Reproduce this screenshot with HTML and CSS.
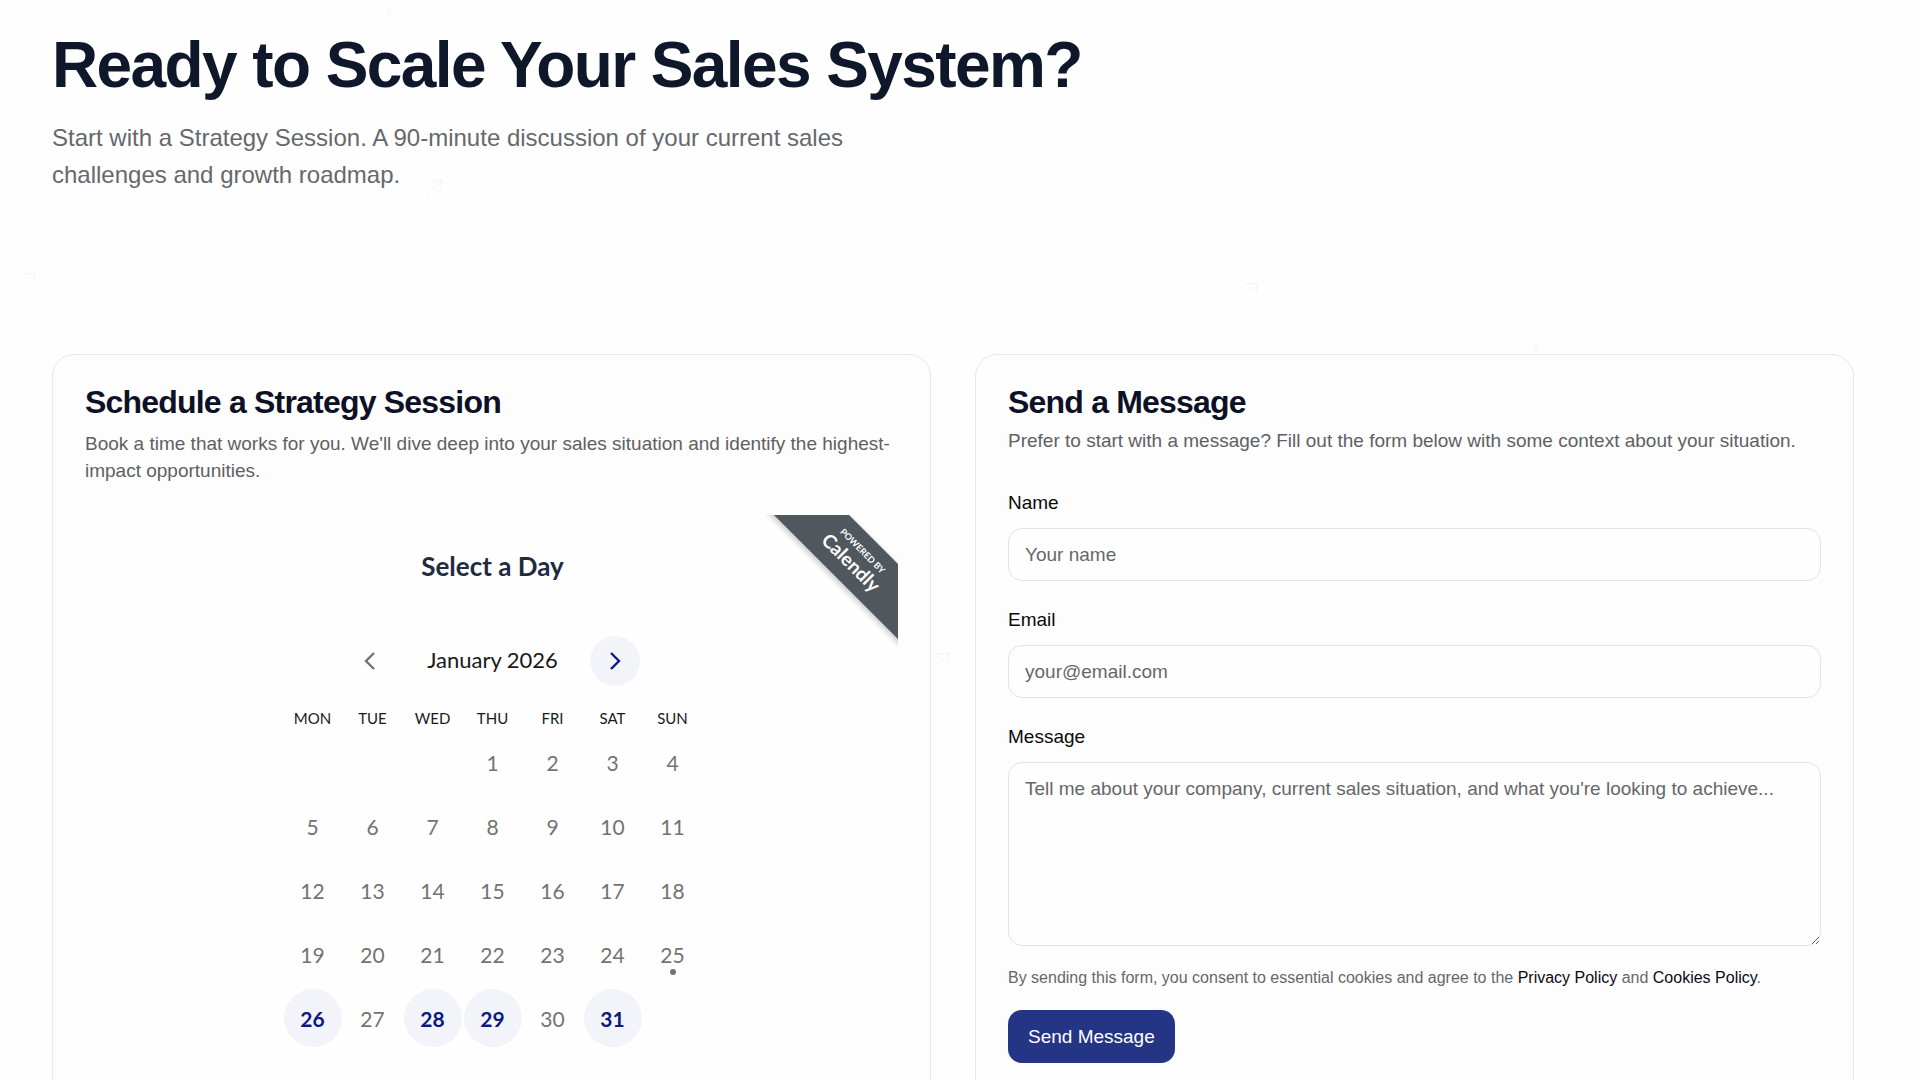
FILE: index.html
```html
<!DOCTYPE html>
<html lang="en">

<head>
    <meta charset="UTF-8">
    <meta name="viewport" content="width=device-width, initial-scale=1.0">
    <link rel="stylesheet" href="styles.css">
    <title>Contact</title>
</head>

<body>
    <!-- faint background arrows -->
    <div class="arrows" aria-hidden="true">
        <svg class="arrow arrow-1" viewBox="0 0 18 18"><path d="M1 17L17 1M6 2l11-1-1 9" /></svg>
        <svg class="arrow arrow-2" viewBox="0 0 18 18"><path d="M1 17L17 1M6 2l11-1-1 9" /></svg>
        <svg class="arrow arrow-3" viewBox="0 0 18 18"><path d="M1 17L17 1M6 2l11-1-1 9" /></svg>
        <svg class="arrow arrow-4" viewBox="0 0 18 18"><path d="M1 17L17 1M6 2l11-1-1 9" /></svg>
        <span class="speck speck-1"></span>
        <span class="speck speck-2"></span>
    </div>

    <main class="page">
        <header class="intro">
            <h1>Ready to Scale Your Sales System?</h1>
            <p>Start with a Strategy Session. A 90-minute discussion of your current sales challenges and growth roadmap.</p>
        </header>

        <div class="cards">
            <section class="card schedule">
                <h2>Schedule a Strategy Session</h2>
                <p class="desc">Book a time that works for you. We'll dive deep into your sales situation and identify the highest-impact opportunities.</p>

                <div class="booking">
                    <div class="ribbon">
                        <a href="#" class="ribbon-band">
                            <span class="powered">POWERED BY</span>
                            <span class="brand">Calendly</span>
                        </a>
                    </div>

                    <h3>Select a Day</h3>
                    <div class="month">
                        <button type="button" class="month-btn" aria-label="Previous month" disabled>
                            <svg viewBox="0 0 12 18"><path d="M10 1L2 9l8 8" /></svg>
                        </button>
                        <span class="month-name">January 2026</span>
                        <button type="button" class="month-btn next" aria-label="Next month">
                            <svg viewBox="0 0 12 18"><path d="M2 1l8 8-8 8" /></svg>
                        </button>
                    </div>

                    <table class="calendar">
                        <thead>
                            <tr>
                                <th>MON</th>
                                <th>TUE</th>
                                <th>WED</th>
                                <th>THU</th>
                                <th>FRI</th>
                                <th>SAT</th>
                                <th>SUN</th>
                            </tr>
                        </thead>
                        <tbody>
                            <tr>
                                <td></td>
                                <td></td>
                                <td></td>
                                <td>1</td>
                                <td>2</td>
                                <td>3</td>
                                <td>4</td>
                            </tr>
                            <tr>
                                <td>5</td>
                                <td>6</td>
                                <td>7</td>
                                <td>8</td>
                                <td>9</td>
                                <td>10</td>
                                <td>11</td>
                            </tr>
                            <tr>
                                <td>12</td>
                                <td>13</td>
                                <td>14</td>
                                <td>15</td>
                                <td>16</td>
                                <td>17</td>
                                <td>18</td>
                            </tr>
                            <tr>
                                <td>19</td>
                                <td>20</td>
                                <td>21</td>
                                <td>22</td>
                                <td>23</td>
                                <td>24</td>
                                <td class="today">25</td>
                            </tr>
                            <tr>
                                <td><button type="button" class="day">26</button></td>
                                <td>27</td>
                                <td><button type="button" class="day">28</button></td>
                                <td><button type="button" class="day">29</button></td>
                                <td>30</td>
                                <td><button type="button" class="day">31</button></td>
                                <td></td>
                            </tr>
                        </tbody>
                    </table>
                </div>
            </section>

            <section class="card message">
                <h2>Send a Message</h2>
                <p class="desc">Prefer to start with a message? Fill out the form below with some context about your situation.</p>

                <form action="#">
                    <div class="field">
                        <label for="name">Name</label>
                        <input type="text" id="name" placeholder="Your name">
                    </div>
                    <div class="field">
                        <label for="email">Email</label>
                        <input type="email" id="email" placeholder="your@email.com">
                    </div>
                    <div class="field">
                        <label for="message">Message</label>
                        <textarea id="message" placeholder="Tell me about your company, current sales situation, and what you're looking to achieve..."></textarea>
                    </div>
                    <p class="consent">By sending this form, you consent to essential cookies and agree to the <a href="#">Privacy Policy</a> and <a href="#">Cookies Policy</a>.</p>
                    <button type="submit" class="submit">Send Message</button>
                </form>
            </section>
        </div>
    </main>
</body>

</html>
```

FILE: styles.css
```css
* {
    margin: 0;
    padding: 0;
    box-sizing: border-box;
}

body {
    background-color: #fefefe;
    color: #0f172a;
    font-family: 'Liberation Sans', Arial, sans-serif;
    font-size: 19px;
    line-height: 27px;
}

input,
textarea,
button {
    font: inherit;
}

.page {
    position: relative;
    padding: 29px 66px 40px 52px;
}

.arrow {
    position: absolute;
    width: 18px;
    height: 18px;
    fill: none;
    stroke: #f1f4f9;
    stroke-width: 1;
}

.arrow-1 {
    left: 18px;
    top: 272px;
}

.arrow-2 {
    left: 425px;
    top: 179px;
}

.arrow-3 {
    left: 1240px;
    top: 282px;
}

.arrow-4 {
    left: 932px;
    top: 652px;
}

.speck {
    position: absolute;
    width: 4px;
    height: 8px;
    background-color: #f8f9fc;
}

.speck-1 {
    left: 387px;
    top: 9px;
}

.speck-2 {
    left: 1534px;
    top: 344px;
}

.intro {
    margin-bottom: 161px;
}

h1 {
    font-size: 64px;
    line-height: 72px;
    letter-spacing: -0.025em;
    margin-bottom: 18px;
}

.intro p {
    max-width: 820px;
    font-size: 24px;
    line-height: 37px;
    color: #67686c;
}

.cards {
    display: grid;
    grid-template-columns: 1fr 1fr;
    gap: 44px;
}

.card {
    padding: 27px 32px;
    background-color: #fdfdfd;
    border: 1px solid #e8e8ea;
    border-radius: 22px;
}

h2 {
    font-size: 32px;
    line-height: 40px;
    letter-spacing: -0.025em;
    color: #0d1126;
}

.desc {
    color: #5f6064;
}

.schedule .desc {
    margin: 8px 0 31px;
}

.message .desc {
    margin: 5px 0 35px;
}

/* booking widget */
.booking {
    position: relative;
    padding: 35px 0 60px 2px;
    background-color: #fefefe;
    font-family: Lato, sans-serif;
}

.booking h3 {
    font-size: 26px;
    line-height: 32px;
    text-align: center;
    color: #1f2b40;
}

.ribbon {
    position: absolute;
    top: 0;
    right: 0;
    width: 150px;
    height: 150px;
    overflow: hidden;
}

.ribbon-band {
    position: absolute;
    left: -13px;
    top: 17px;
    width: 240px;
    height: 53px;
    padding-top: 10px;
    display: flex;
    flex-direction: column;
    align-items: center;
    transform: rotate(45deg);
    background-color: #50575d;
    box-shadow: 0 2px 6px rgba(0, 0, 0, 0.25);
    color: #fff;
    text-decoration: none;
}

.powered {
    font-size: 9px;
    line-height: 11px;
    font-weight: bold;
}

.brand {
    font-size: 19px;
    line-height: 22px;
    font-weight: bold;
}

.month {
    display: flex;
    justify-content: center;
    align-items: center;
    gap: 32px;
    margin-top: 54px;
}

.month-name {
    padding-bottom: 3px;
    font-size: 22px;
    color: #1a1a1a;
}

.month-btn {
    display: flex;
    justify-content: center;
    align-items: center;
    width: 50px;
    height: 50px;
    border: none;
    border-radius: 50%;
    background-color: transparent;
    color: #737373;
}

.month-btn svg {
    width: 12px;
    height: 18px;
    fill: none;
    stroke: currentColor;
    stroke-width: 2.4;
}

.next {
    background-color: #f3f4f9;
    color: #0a1a80;
    cursor: pointer;
}

.calendar {
    width: 420px;
    margin: 20px auto 0;
    table-layout: fixed;
    border-collapse: collapse;
    text-align: center;
}

.calendar th {
    height: 24px;
    font-size: 15px;
    line-height: 24px;
    font-weight: normal;
    color: #1a1a1a;
}

.calendar td {
    position: relative;
    height: 64px;
    font-size: 21px;
    color: #737373;
}

.day {
    width: 58px;
    height: 58px;
    border: none;
    border-radius: 50%;
    background-color: #f3f4f9;
    color: #0a1a80;
    font-weight: bold;
    cursor: pointer;
}

.today::after {
    content: '';
    position: absolute;
    left: 50%;
    bottom: 11px;
    width: 6px;
    height: 6px;
    margin-left: -3px;
    border-radius: 50%;
    background-color: #737373;
}

/* contact form */
.field {
    display: flex;
    flex-direction: column;
    gap: 12px;
    margin-bottom: 25px;
}

.field label {
    color: #0a0a0a;
}

.field input,
.field textarea {
    width: 100%;
    padding: 12px 16px;
    border: 1px solid #e3e3e6;
    border-radius: 14px;
    background-color: #fefefe;
}

.field textarea {
    height: 184px;
    resize: vertical;
}

.field ::placeholder {
    color: #66676b;
}

.consent {
    margin: -5px 0 20px;
    font-size: 16px;
    line-height: 24px;
    color: #66676b;
}

.consent a {
    color: #0a0a14;
    text-decoration: none;
}

.submit {
    padding: 13px 20px;
    border: none;
    border-radius: 14px;
    background-color: #233584;
    color: #fff;
    cursor: pointer;
}

@media (max-width: 1024px) {
    .page {
        padding: 24px;
    }

    .intro {
        margin-bottom: 60px;
    }

    h1 {
        font-size: 40px;
        line-height: 48px;
    }

    .cards {
        grid-template-columns: 1fr;
    }
}
```
